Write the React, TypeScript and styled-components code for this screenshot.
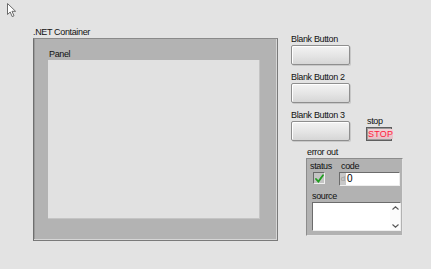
import React from "react";
import styled, { createGlobalStyle } from "styled-components";

const GlobalStyle = createGlobalStyle`
  html, body {
    margin: 0;
    padding: 0;
    background: #e3e3e3;
    font-family: "Liberation Sans", Arial, sans-serif;
  }
`;

const Page = styled.div`
  position: relative;
  width: 431px;
  height: 269px;
  box-sizing: border-box;
  padding: 27px 0 0 33px;
  display: flex;
  align-items: flex-start;
  overflow: hidden;
`;

const Cursor = styled.svg`
  position: absolute;
  left: 7px;
  top: 3px;
`;

const Label = styled.div<{ $indent?: number }>`
  font-size: 9px;
  letter-spacing: -0.35px;
  line-height: 11px;
  height: 11px;
  color: #111111;
  white-space: nowrap;
  padding-left: ${(p) => p.$indent ?? 0}px;
`;

const LeftCol = styled.div`
  display: flex;
  flex-direction: column;
`;

const Container = styled.div`
  width: 245px;
  height: 203px;
  box-sizing: border-box;
  background: #b3b3b3;
  border-top: 1px solid #8a8a8a;
  border-left: 1px solid #6f6f6f;
  border-right: 1px solid #7a7a7a;
  border-bottom: 1px solid #7a7a7a;
  box-shadow: inset -1px -1px 0 #d6d6d6, inset 1px 0 0 #9a9a9a;
  padding: 10px 0 0 14px;
  display: flex;
  flex-direction: column;
`;

const PanelBox = styled.div`
  width: 212px;
  height: 159px;
  box-sizing: border-box;
  background: #e1e1e1;
  border-right: 1px solid #c4c4c4;
  border-bottom: 1px solid #c4c4c4;
`;

const RightCol = styled.div`
  margin-left: 13px;
  padding-top: 7px;
  display: flex;
  flex-direction: column;
  gap: 7px;
`;

const Group = styled.div`
  display: flex;
  flex-direction: column;
`;

const Row = styled.div`
  display: flex;
  align-items: flex-end;
  gap: 16px;
`;

const BlankButton = styled.div`
  width: 59px;
  height: 20px;
  box-sizing: border-box;
  border: 1px solid #8e8e8e;
  border-radius: 2px;
  background: linear-gradient(#f3f3f3, #e6e6e6 50%, #d6d6d6);
  box-shadow: inset 1px 1px 0 #ffffff, 1px 1px 0 #c8c8c8;
`;

const StopButton = styled.div`
  width: 26px;
  height: 14px;
  box-sizing: border-box;
  border: 1px solid #5e5e5e;
  background: #9a9a9a;
  padding: 1px;
  display: flex;
`;

const StopFace = styled.div`
  flex: 1;
  background: linear-gradient(#f2d4d8, #e6c0c6);
  color: #ff1a3c;
  font-size: 9px;
  line-height: 10px;
  text-align: center;
  letter-spacing: 0.2px;
`;

const ErrorGroup = styled.div`
  margin-left: 15px;
  margin-top: -1px;
  display: flex;
  flex-direction: column;
`;

const Cluster = styled.div`
  width: 97px;
  height: 78px;
  box-sizing: border-box;
  background: #b2b2b2;
  border: 1px solid #8c8c8c;
  border-right-color: #e6e6e6;
  border-bottom-color: #e6e6e6;
  padding: 2px 2px 0 3px;
  display: grid;
  grid-template-columns: 29px 1fr;
  grid-template-rows: 11px 15px 4px 11px auto;
`;

const Check = styled.div`
  width: 12px;
  height: 12px;
  margin: 0 0 0 3px;
  box-sizing: border-box;
  border: 1px solid #6a6a6a;
  border-right-color: #f0f0f0;
  border-bottom-color: #f0f0f0;
  background: #c4c4c4;
  display: flex;
  align-items: center;
  justify-content: center;
`;

const CodeBox = styled.div`
  width: 61px;
  height: 14px;
  box-sizing: border-box;
  border: 1px solid #6c6c6c;
  border-right-color: #eeeeee;
  border-bottom-color: #eeeeee;
  background: #c8c8c8;
  display: flex;
`;

const Radix = styled.div`
  width: 6px;
  font-size: 8px;
  line-height: 12px;
  color: #9a9a9a;
  text-align: center;
`;

const CodeField = styled.div`
  flex: 1;
  background: #ffffff;
  font-size: 10px;
  line-height: 12px;
  color: #000;
  padding-left: 1px;
`;

const SourceBox = styled.div`
  grid-column: 1 / span 2;
  width: 89px;
  height: 29px;
  margin: 0 0 0 2px;
  box-sizing: border-box;
  border: 1px solid #6c6c6c;
  border-right-color: #eeeeee;
  border-bottom-color: #eeeeee;
  background: #ffffff;
  display: flex;
  justify-content: flex-end;
`;

const ScrollBar = styled.div`
  width: 10px;
  display: flex;
  flex-direction: column;
  justify-content: space-between;
  align-items: center;
  padding: 3px 0 2px;
  background: #fbfbfb;
`;

function Chevron({ up }: { up?: boolean }) {
  return (
    <svg width="7" height="4" viewBox="0 0 7 4">
      <path
        d={up ? "M0.5 3.5 L3.5 0.8 L6.5 3.5" : "M0.5 0.5 L3.5 3.2 L6.5 0.5"}
        fill="none"
        stroke="#555"
        strokeWidth="1.1"
      />
    </svg>
  );
}

function ButtonGroup({ label }: { label: string }) {
  return (
    <Group>
      <Label>{label}</Label>
      <BlankButton />
    </Group>
  );
}

export default function App() {
  return (
    <>
      <GlobalStyle />
      <Page>
        <Cursor width="12" height="15" viewBox="0 0 12 15">
          <path
            d="M0.5 0.5 L0.5 11.5 L3.2 9 L5.2 13.6 L7 12.8 L5 8.3 L8.6 8.3 Z"
            fill="#ffffff"
            stroke="#6a6a6a"
            strokeWidth="1"
            strokeLinejoin="round"
          />
        </Cursor>

        <LeftCol>
          <Label>.NET Container</Label>
          <Container>
            <Label $indent={1}>Panel</Label>
            <PanelBox />
          </Container>
        </LeftCol>

        <RightCol>
          <ButtonGroup label="Blank Button" />
          <ButtonGroup label="Blank Button 2" />
          <Row>
            <ButtonGroup label="Blank Button 3" />
            <Group>
              <Label $indent={1}>stop</Label>
              <StopButton>
                <StopFace>STOP</StopFace>
              </StopButton>
            </Group>
          </Row>
          <ErrorGroup>
            <Label $indent={1}>error out</Label>
            <Cluster>
              <Label>status</Label>
              <Label $indent={2}>code</Label>
              <Check>
                <svg width="9" height="9" viewBox="0 0 9 9">
                  <path
                    d="M1 5 L3.4 7.6 L8 1.2"
                    fill="none"
                    stroke="#1e9e1e"
                    strokeWidth="1.8"
                    strokeLinecap="round"
                  />
                </svg>
              </Check>
              <CodeBox>
                <Radix>d</Radix>
                <CodeField>0</CodeField>
              </CodeBox>
              <div />
              <div />
              <Label $indent={2}>source</Label>
              <div />
              <SourceBox>
                <ScrollBar>
                  <Chevron up />
                  <Chevron />
                </ScrollBar>
              </SourceBox>
            </Cluster>
          </ErrorGroup>
        </RightCol>
      </Page>
    </>
  );
}
